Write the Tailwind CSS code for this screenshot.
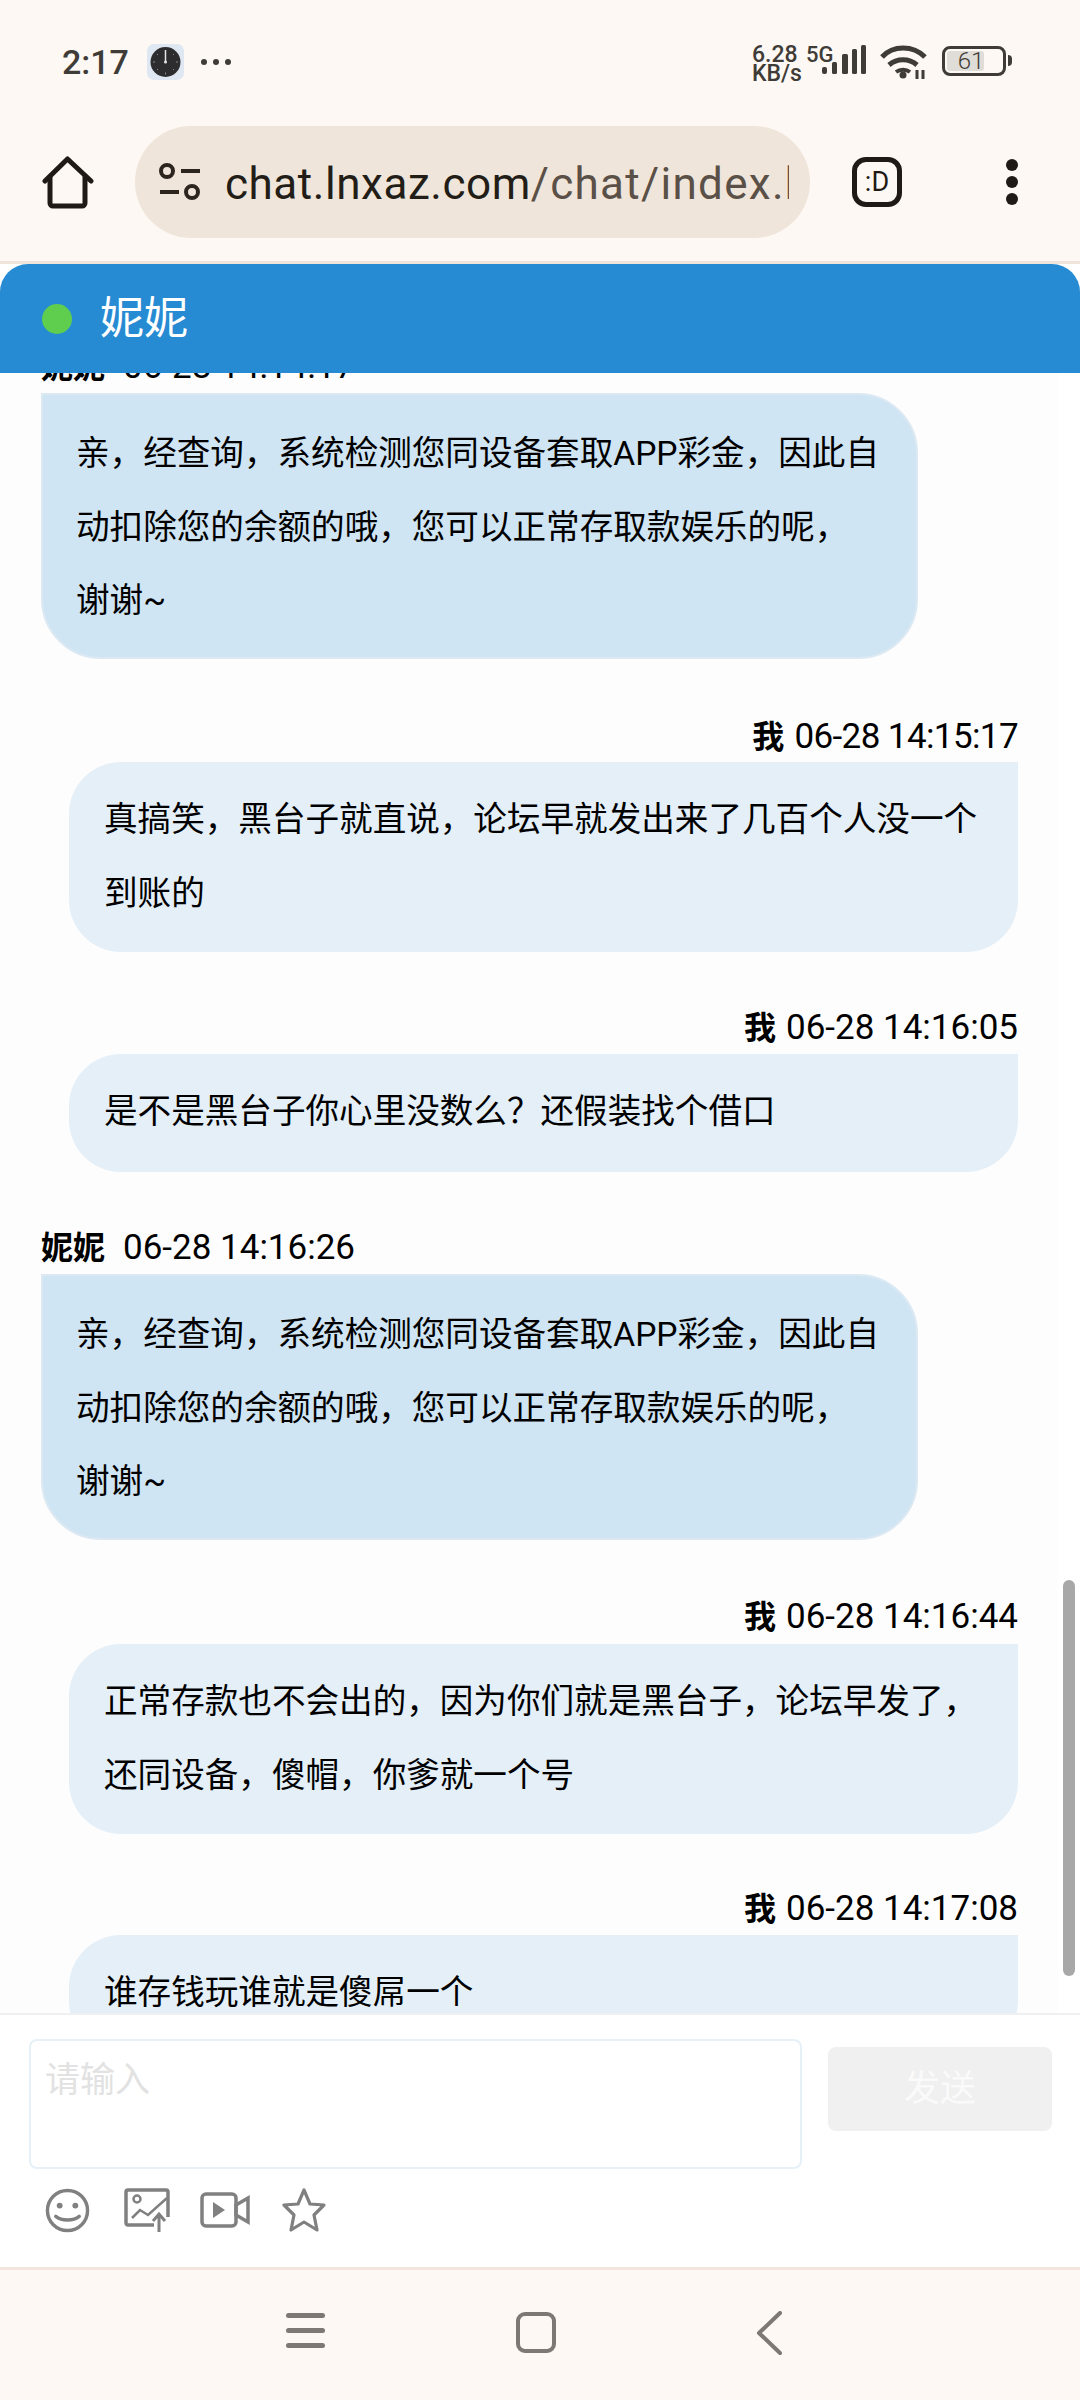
<!DOCTYPE html>
<html lang="zh"><head><meta charset="utf-8"><script src="https://cdn.jsdelivr.net/npm/@tailwindcss/browser@4"></script></head>
<body class="m-0 bg-white">
<div class="w-[1080px] h-[2400px] flex flex-col overflow-hidden bg-[#fdf8f3] font-['Roboto','Noto_Sans_CJK_SC',sans-serif] text-black">
  <!-- status bar -->
  <div class="h-[126px] shrink-0 flex items-center pl-[62px] pr-[68px] text-[#3f3c38]">
    <span class="text-[34px] font-medium leading-none w-[85px] mt-[-2px]">2:17</span>
    <svg width="37" height="36" viewBox="0 0 37 36" class="mt-[-2px]"><rect width="37" height="36" rx="7" fill="#dfe8f2"/><circle cx="18.5" cy="18" r="15" fill="#2d2d2f"/><path d="M18.5 6v12" stroke="#e6e6e6" stroke-width="1.5"/><circle cx="18.5" cy="18" r="1.5" fill="#e6e6e6"/><path d="M18.5 28.5v2M6 18h2M29 18h2M10 10l1 1M27 10l-1 1M10 26l1-1M27 26l-1-1" stroke="#888" stroke-width="1"/></svg>
    <div class="ml-[17px] flex gap-[6px] mt-[-2px]"><i class="block w-[6px] h-[6px] rounded-full bg-[#3f3c38]"></i><i class="block w-[6px] h-[6px] rounded-full bg-[#3f3c38]"></i><i class="block w-[6px] h-[6px] rounded-full bg-[#3f3c38]"></i></div>
    <div class="ml-auto flex items-start h-[40px] mt-[1px]">
      <div class="text-[23px] font-medium leading-[19px] w-[53px] mt-[1px]"><div>6.28</div><div>KB/s</div></div>
      <div class="relative w-[75px] h-[40px]">
        <span class="absolute left-[1px] top-[1px] text-[22px] font-medium leading-[19px]">5G</span>
        <svg class="absolute left-[17px] top-0" width="46" height="32" viewBox="0 0 46 32"><g fill="#3f3c38"><rect x="0" y="23" width="5" height="7" rx="2"/><rect x="10" y="18" width="5" height="12" rx="1.5"/><rect x="20" y="10" width="6" height="20" rx="1.5"/><rect x="30" y="5" width="5" height="25" rx="1.5"/><rect x="39" y="1" width="5" height="29" rx="1.5"/></g></svg>
      </div>
      <svg width="48" height="36" viewBox="0 0 48 36" fill="none" stroke="#3f3c38"><path d="M2 13C13 1 33 1 45 13" stroke-width="5"/><path d="M9 21c8-7 20-7 28 0" stroke-width="5"/><path d="M16 28c4-3 10-3 14 0" stroke-width="4"/><circle cx="23" cy="31" r="3.5" fill="#3f3c38" stroke="none"/><path d="M37 26v9M43 26v9" stroke-width="3"/></svg>
      <div class="ml-[14px] flex items-center h-[30px] mt-[2px]">
        <div class="w-[64px] h-[30px] rounded-[8px] border-[3px] border-[#3f3c38] p-[2px] relative flex">
          <div class="w-[37px] h-full rounded-[3px] bg-[#e0dcd7]"></div>
          <span class="absolute inset-0 flex items-center justify-center pr-[6px] text-[24px] leading-none font-light">61</span>
        </div>
        <div class="w-[4px] h-[11px] ml-[2px] rounded-r bg-[#3f3c38]"></div>
      </div>
    </div>
  </div>
  <!-- browser bar -->
  <div class="h-[135px] shrink-0 relative">
    <svg class="absolute left-[42px] top-[27px]" width="52" height="56" viewBox="0 0 52 56" fill="none" stroke="#1f1a16" stroke-width="5" stroke-linejoin="round" stroke-linecap="round"><path d="M3 28 25.5 6 49 28"/><path d="M8 24v26a3 3 0 0 0 3 3h29a3 3 0 0 0 3-3V24"/></svg>
    <div class="absolute left-[135px] top-0 w-[675px] h-[112px] rounded-[56px] bg-[#f0e5da] flex items-center pl-[24px] overflow-hidden">
      <svg width="42" height="42" viewBox="0 0 42 42" fill="none" stroke="#2c251f" stroke-width="4" class="shrink-0"><circle cx="8" cy="10" r="6"/><path d="M22 10h19M1 31h19"/><circle cx="33" cy="31" r="6"/></svg>
      <div class="ml-[24px] mt-[4px] w-[564px] overflow-hidden whitespace-nowrap text-[44px] leading-none tracking-[0.55px] text-[#5a5047]"><span class="text-[#231d18]">chat.lnxaz.com</span><span class="tracking-[1.3px]">/chat/index.html</span></div>
    </div>
    <div class="absolute left-[852px] top-[31px] w-[50px] h-[50px] rounded-[14px] border-[5px] border-[#1f1a16] flex items-center justify-center text-[27px] leading-none text-[#1f1a16]">:D</div>
    <div class="absolute left-[1006px] top-[33px] flex flex-col gap-[5px]"><i class="block w-[12px] h-[12px] rounded-full bg-[#1f1a16]"></i><i class="block w-[12px] h-[12px] rounded-full bg-[#1f1a16]"></i><i class="block w-[12px] h-[12px] rounded-full bg-[#1f1a16]"></i></div>
  </div>
  <!-- page -->
  <div class="h-[3px] shrink-0 bg-[#f0e5da]"></div>
  <div class="flex-1 min-h-0 flex flex-col bg-white">
    <div class="h-[109px] shrink-0 rounded-t-[28px] bg-[#268bd2] flex items-center pl-[42px] relative z-10">
      <i class="block w-[30px] h-[30px] rounded-full bg-[#5fce4f]"></i>
      <span class="ml-[28px] text-[44px] leading-none text-white">妮妮</span>
    </div>
    <div class="h-[1642px] shrink-0 relative overflow-hidden bg-[#fdfdfd] border-b-[2px] border-[#eef0f2]">
      <div class="absolute right-0 top-0 bottom-0 w-[22px] bg-white"></div>
      <div class="absolute right-[5px] top-[1207px] w-[12px] h-[396px] rounded-full bg-[#a8a8a8]"></div>
      <div class="absolute left-0 right-0 top-[-28px] text-[33.6px] leading-[73.5px]">
        <div class="h-[48px] pl-[41px] text-[35px] leading-[44px]"><b class="text-[32px]">妮妮</b><span class="ml-[18px]">06-28 14:14:17</span></div>
        <div class="ml-[41px] w-[877px] h-[266px] rounded-[0_60px_60px_60px] bg-[#d0e5f3] border-[2px] border-[#dce9f3] py-[22px] pl-[33px]">亲，经查询，系统检测您同设备套取APP彩金，因此自<br>动扣除您的余额的哦，您可以正常存取款娱乐的呢，<br>谢谢~</div>

        <div class="mt-[56px] mr-[62px] h-[47px] text-right text-[35px] leading-[44px]"><b class="text-[32px]">我</b><span class="ml-[10px] tracking-[-0.6px]">06-28 14:15:17</span></div>
        <div class="ml-[69px] mr-[62px] h-[190px] rounded-[52px_0_52px_52px] bg-[#e4eff8] py-[21px] pl-[35px]">真搞笑，黑台子就直说，论坛早就发出来了几百个人没一个<br>到账的</div>

        <div class="mt-[54px] mr-[62px] h-[48px] text-right text-[35px] leading-[44px]"><b class="text-[32px]">我</b><span class="ml-[10px]">06-28 14:16:05</span></div>
        <div class="ml-[69px] mr-[62px] h-[118px] rounded-[52px_0_52px_52px] bg-[#e4eff8] py-[21px] pl-[35px]">是不是黑台子你心里没数么？还假装找个借口</div>

        <div class="mt-[54px] h-[48px] pl-[41px] text-[35px] leading-[44px]"><b class="text-[32px]">妮妮</b><span class="ml-[18px]">06-28 14:16:26</span></div>
        <div class="ml-[41px] w-[877px] h-[266px] rounded-[0_60px_60px_60px] bg-[#d0e5f3] border-[2px] border-[#dce9f3] py-[22px] pl-[33px]">亲，经查询，系统检测您同设备套取APP彩金，因此自<br>动扣除您的余额的哦，您可以正常存取款娱乐的呢，<br>谢谢~</div>

        <div class="mt-[55px] mr-[62px] h-[49px] text-right text-[35px] leading-[44px]"><b class="text-[32px]">我</b><span class="ml-[10px]">06-28 14:16:44</span></div>
        <div class="ml-[69px] mr-[62px] h-[190px] rounded-[52px_0_52px_52px] bg-[#e4eff8] py-[21px] pl-[35px]">正常存款也不会出的，因为你们就是黑台子，论坛早发了，<br>还同设备，傻帽，你爹就一个号</div>

        <div class="mt-[53px] mr-[62px] h-[48px] text-right text-[35px] leading-[44px]"><b class="text-[32px]">我</b><span class="ml-[10px]">06-28 14:17:08</span></div>
        <div class="ml-[69px] mr-[62px] h-[118px] rounded-[52px_0_52px_52px] bg-[#e4eff8] py-[21px] pl-[35px]">谁存钱玩谁就是傻屌一个</div>
      </div>
    </div>
    <div class="flex-1 min-h-0 bg-white">
      <div class="flex items-start pl-[29px] pt-[24px]">
        <div class="w-[773px] h-[130px] rounded-[8px] border-[2px] border-[#e6f0f7] pl-[14px] pt-[20px] text-[35px] leading-[40px] text-[#e2e2e2]">请输入</div>
        <div class="ml-[26px] mt-[8px] w-[224px] h-[84px] rounded-[8px] bg-[#f0f0f0] flex items-center justify-center text-[36px] leading-none text-[#fafafa]">发送</div>
      </div>
      <div class="flex items-center pl-[45px] mt-[17px] h-[48px] blur-[0.5px]">
        <svg width="45" height="45" viewBox="0 0 46 46" fill="none" stroke="#808080" stroke-width="3.5"><circle cx="23" cy="23" r="20.5"/><circle cx="15" cy="18" r="3" fill="#808080" stroke="none"/><circle cx="31" cy="18" r="3" fill="#808080" stroke="none"/><path d="M11 29c6 5 18 5 24 0" stroke-linecap="round"/></svg>
        <svg width="46" height="44" viewBox="0 0 46 44" fill="none" stroke="#808080" stroke-width="3.5" class="ml-[34px]"><path d="M30 37H4a2 2 0 0 1-2-2V4a2 2 0 0 1 2-2h38a2 2 0 0 1 2 2v25"/><circle cx="13" cy="11" r="3.5" stroke-width="2.5"/><path d="M8 30l8-8 8 5 19-17" stroke-width="2.5"/><path d="M35 44V26m-6 7 6-7 6 7" stroke-width="3"/></svg>
        <svg width="50" height="36" viewBox="0 0 50 36" fill="none" stroke="#808080" stroke-width="3.5" class="ml-[30px]"><rect x="2" y="2" width="34" height="32" rx="4"/><path d="M36 13l12-7v24l-12-7z"/><path d="M13 10l12 8-12 8z" fill="#808080" stroke="none"/></svg>
        <svg width="44" height="44" viewBox="0 0 44 44" fill="none" stroke="#808080" stroke-width="3.2" stroke-linejoin="round" class="ml-[32px]"><path d="M22 2l6 14 14 1-10 10 3 15-13-8-13 8 3-15L2 17l14-1z"/></svg>
      </div>
    </div>
    <div class="h-[133px] shrink-0 relative bg-[#fdf8f3] border-t-[3px] border-[#f4e6de]">
      <div class="absolute left-[286px] top-[43px] flex flex-col gap-[10px]"><i class="block w-[39px] h-[5px] rounded-full bg-[#7d7873]"></i><i class="block w-[39px] h-[5px] rounded-full bg-[#7d7873]"></i><i class="block w-[39px] h-[5px] rounded-full bg-[#7d7873]"></i></div>
      <div class="absolute left-[516px] top-[42px] w-[40px] h-[41px] rounded-[9px] border-[4px] border-[#7d7873]"></div>
      <svg class="absolute left-[754px] top-[41px]" width="30" height="44" viewBox="0 0 30 44" fill="none" stroke="#7d7873" stroke-width="4" stroke-linecap="round" stroke-linejoin="round"><path d="M26 2 5 22l21 20"/></svg>
    </div>
  </div>
</div>
</body></html>
